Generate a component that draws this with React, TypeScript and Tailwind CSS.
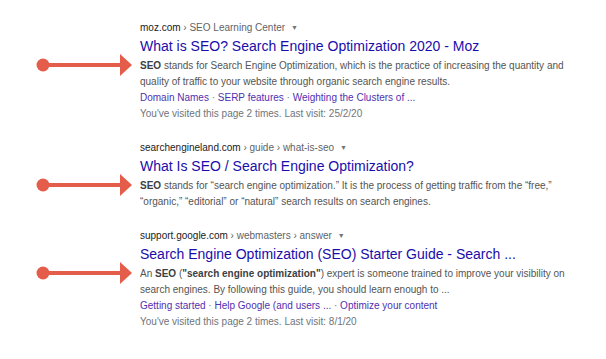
import React from 'react';

interface Result {
  host: string;
  path: string[];
  title: string;
  snippet: React.ReactNode;
  sitelinks?: string[];
  visited?: string;
}

const results: Result[] = [
  {
    host: 'moz.com',
    path: ['SEO Learning Center'],
    title: 'What is SEO? Search Engine Optimization 2020 - Moz',
    snippet: (
      <>
        <b className="font-bold text-[#3c4043]">SEO</b> stands for Search Engine Optimization, which is the practice of
        increasing the quantity and quality of traffic to your website through organic search engine results.
      </>
    ),
    sitelinks: ['Domain Names', 'SERP features', 'Weighting the Clusters of ...'],
    visited: "You've visited this page 2 times. Last visit: 25/2/20",
  },
  {
    host: 'searchengineland.com',
    path: ['guide', 'what-is-seo'],
    title: 'What Is SEO / Search Engine Optimization?',
    snippet: (
      <>
        <b className="font-bold text-[#3c4043]">SEO</b> stands for “search engine optimization.” It is the process of
        getting traffic from the “free,” “organic,” “editorial” or “natural” search results on search engines.
      </>
    ),
  },
  {
    host: 'support.google.com',
    path: ['webmasters', 'answer'],
    title: 'Search Engine Optimization (SEO) Starter Guide - Search ...',
    snippet: (
      <>
        An <b className="font-bold text-[#3c4043]">SEO</b> (
        <b className="font-bold text-[#3c4043]">"search engine optimization"</b>) expert is someone trained to improve
        your visibility on search engines. By following this guide, you should learn enough to ...
      </>
    ),
    sitelinks: ['Getting started', 'Help Google (and users ...', 'Optimize your content'],
    visited: "You've visited this page 2 times. Last visit: 8/1/20",
  },
];

function Arrow() {
  return (
    <svg className="absolute -left-[110px] top-[-5px]" width="105" height="24" viewBox="0 0 105 24">
      <circle cx="13" cy="12" r="6.5" fill="#e35d4a" />
      <rect x="13" y="10" width="80" height="4" fill="#e35d4a" />
      <polygon points="90,1 102,12 90,23" fill="#e35d4a" />
    </svg>
  );
}

export default function App() {
  return (
    <div className="w-[606px] h-[359px] bg-white overflow-hidden font-['Liberation_Sans',Arial,sans-serif]">
      <div className="flex flex-col gap-[18px] pl-[140px] pt-[20px]">
        {results.map((r) => (
          <div key={r.host} className="w-[436px]">
            <div className="flex items-center text-[10px] leading-[16px] text-[#5f6368]">
              <span className="text-[#202124]">{r.host}</span>
              {r.path.map((p) => (
                <span key={p}>&nbsp;› {p}</span>
              ))}
              <span className="ml-[6px] text-[7px] text-[#70757a]">▼</span>
            </div>

            <div className="text-[14px] leading-[21px] text-[#1a0dab] whitespace-nowrap">{r.title}</div>

            <div className="relative mt-px">
              <Arrow />
              <p className="text-[10px] leading-[16px] text-[#545454]">{r.snippet}</p>
            </div>

            {r.sitelinks && (
              <div className="text-[10px] leading-[16px] text-[#5230b0]">
                {r.sitelinks.map((s, i) => (
                  <span key={s}>
                    {i > 0 && <span className="text-[#70757a]"> · </span>}
                    {s}
                  </span>
                ))}
              </div>
            )}

            {r.visited && <div className="text-[10px] leading-[16px] text-[#70757a]">{r.visited}</div>}
          </div>
        ))}
      </div>
    </div>
  );
}
